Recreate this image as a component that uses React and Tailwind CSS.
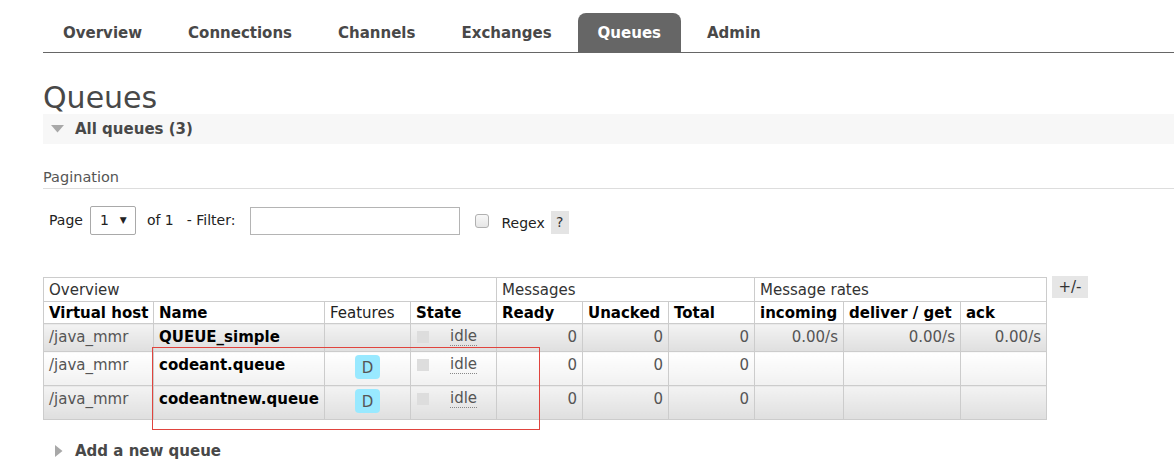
import React from 'react';

const tabs = ['Overview', 'Connections', 'Channels', 'Exchanges', 'Queues', 'Admin'];

const rows = [
  { vhost: '/java_mmr', name: 'QUEUE_simple', durable: false, rates: true, alt: 1 },
  { vhost: '/java_mmr', name: 'codeant.queue', durable: true, rates: false, alt: 2 },
  { vhost: '/java_mmr', name: 'codeantnew.queue', durable: true, rates: false, alt: 1 },
];

const colWidths = [110, 171, 86, 86, 86, 86, 86, 89, 117, 86];

function Cell({ alt, pad = 'pt-[4px] pb-[5px]', className = '', children }) {
  const bg =
    alt === 1
      ? 'bg-linear-to-b from-[#f3f3f3] to-[#dfdfdf]'
      : 'bg-linear-to-b from-[#ffffff] to-[#f1f1f1]';
  return (
    <td className={`border border-[#cccccc] px-[5px] leading-[18px] align-top ${pad} ${bg} ${className}`}>
      {children}
    </td>
  );
}

export default function App() {
  return (
    <div
      className="relative min-h-screen bg-white pl-[43px] text-[#484848]"
      style={{ fontFamily: "'DejaVu Sans', Verdana, sans-serif" }}
    >
      {/* tab bar */}
      <div className="flex gap-[6px] border-b border-[#666666] pt-[13px]">
        {tabs.map(t => (
          <div
            key={t}
            className={`flex h-[39px] items-center px-[20px] pt-[1px] text-[15px] font-bold ${
              t === 'Queues' ? 'rounded-t-[8px] bg-[#666666] text-white' : 'text-[#484848]'
            }`}
          >
            {t}
          </div>
        ))}
      </div>

      <h1 className="mt-[28px] text-[30px] font-normal leading-[33px] text-[#484848]">Queues</h1>

      <div className="flex h-[30px] items-center bg-[#f7f7f7]">
        <svg width="13" height="8" viewBox="0 0 13 8" className="ml-[8px] mr-[11px]">
          <path d="M0 0 L13 0 L6.5 7.5 Z" fill="#a8a8a8" />
        </svg>
        <span className="text-[15px] font-bold">All queues (3)</span>
      </div>

      <div className="mt-[24px] border-b border-[#dddddd] pb-[2px] text-[14.5px] leading-[18px] text-[#555555]">
        Pagination
      </div>

      {/* pagination row */}
      <div className="mt-[17px] flex items-center text-[14px] text-[#222222]">
        <span className="ml-[6px]">Page</span>
        <div className="ml-[7px] flex h-[29px] w-[46px] items-center rounded-[2px] border border-[#a9a9a9] bg-white pl-[9px]">
          <span>1</span>
          <span className="ml-[11px] text-[9px]">▼</span>
        </div>
        <span className="ml-[11px]">of 1</span>
        <span className="ml-[13px]">- Filter:</span>
        <div className="ml-[15px] h-[28px] w-[210px] border border-[#b4b4b4] bg-white" />
        <span className="ml-[15px] h-[14px] w-[14px] rounded-[3px] border border-[#b0b0b0] bg-linear-to-b from-[#f8f8f8] to-[#e6e6e6]" />
        <span className="ml-[12px] pt-[6px]">Regex</span>
        <span className="ml-[6px] mt-[3px] flex h-[23px] w-[18px] items-center justify-center bg-[#e4e4e4] text-[#333333]">
          ?
        </span>
      </div>

      {/* queues table */}
      <div className="mt-[42px] flex items-start gap-[5px]">
        <table className="w-[1004px] table-fixed border-collapse text-[15px]">
          <colgroup>
            {colWidths.map((w, i) => (
              <col key={i} style={{ width: w }} />
            ))}
          </colgroup>
          <thead>
            <tr className="text-[#333333]">
              <th colSpan={4} className="h-[24px] border border-[#cccccc] px-[5px] text-left font-normal leading-[18px]">Overview</th>
              <th colSpan={3} className="h-[24px] border border-[#cccccc] px-[5px] text-left font-normal leading-[18px]">Messages</th>
              <th colSpan={3} className="h-[24px] border border-[#cccccc] px-[5px] text-left font-normal leading-[18px]">Message rates</th>
            </tr>
            <tr className="text-black">
              {['Virtual host', 'Name', 'Features', 'State', 'Ready', 'Unacked', 'Total', 'incoming', 'deliver / get', 'ack'].map(h => (
                <th
                  key={h}
                  className={`h-[22px] whitespace-nowrap border border-[#cccccc] px-[5px] text-left leading-[18px] ${
                    h === 'Features' ? 'font-normal text-[#222222]' : 'font-bold'
                  }`}
                >
                  {h}
                </th>
              ))}
            </tr>
          </thead>
          <tbody>
            {rows.map(r => (
              <tr key={r.name}>
                <Cell alt={r.alt} className="text-[#555555]">{r.vhost}</Cell>
                <Cell alt={r.alt} className="whitespace-nowrap font-bold text-black">{r.name}</Cell>
                <Cell alt={r.alt} pad={r.durable ? 'pt-[3px] pb-[6px]' : 'pt-[4px] pb-[5px]'}>
                  {r.durable && (
                    <div className="flex justify-center">
                      <span className="flex h-[24px] w-[25px] items-center justify-center rounded-[4px] bg-[#99e9ff] pt-[2px] text-[#555555]">
                        D
                      </span>
                    </div>
                  )}
                </Cell>
                <Cell alt={r.alt}>
                  <div className="flex items-start">
                    <span className="ml-[1px] mt-[3px] h-[12px] w-[12px] bg-[#dddddd]" />
                    <span className="ml-[21px] border-b border-dotted border-[#888888] leading-[17px] text-[#555555]">idle</span>
                  </div>
                </Cell>
                <Cell alt={r.alt} className="text-right text-[#555555]">0</Cell>
                <Cell alt={r.alt} className="text-right text-[#555555]">0</Cell>
                <Cell alt={r.alt} className="text-right text-[#555555]">0</Cell>
                <Cell alt={r.alt} className="text-right text-[#555555]">{r.rates ? '0.00/s' : ''}</Cell>
                <Cell alt={r.alt} className="text-right text-[#555555]">{r.rates ? '0.00/s' : ''}</Cell>
                <Cell alt={r.alt} className="text-right text-[#555555]">{r.rates ? '0.00/s' : ''}</Cell>
              </tr>
            ))}
          </tbody>
        </table>
        <div className="-mt-[1px] flex h-[22px] w-[36px] items-center justify-center bg-[#e6e6e6] text-[15px] text-[#333333]">
          +/-
        </div>
      </div>

      <div className="mt-[22px] flex items-center pb-[10px]">
        <svg width="8" height="12" viewBox="0 0 8 12" className="ml-[12px] mr-[12px]">
          <path d="M0 0 L7.5 6 L0 12 Z" fill="#a8a8a8" />
        </svg>
        <span className="text-[15px] font-bold leading-[18px]">Add a new queue</span>
      </div>

      {/* annotation box drawn over the table */}
      <div className="pointer-events-none absolute left-[152px] top-[347px] h-[83px] w-[388px] border border-[#e0443e]" />
    </div>
  );
}
